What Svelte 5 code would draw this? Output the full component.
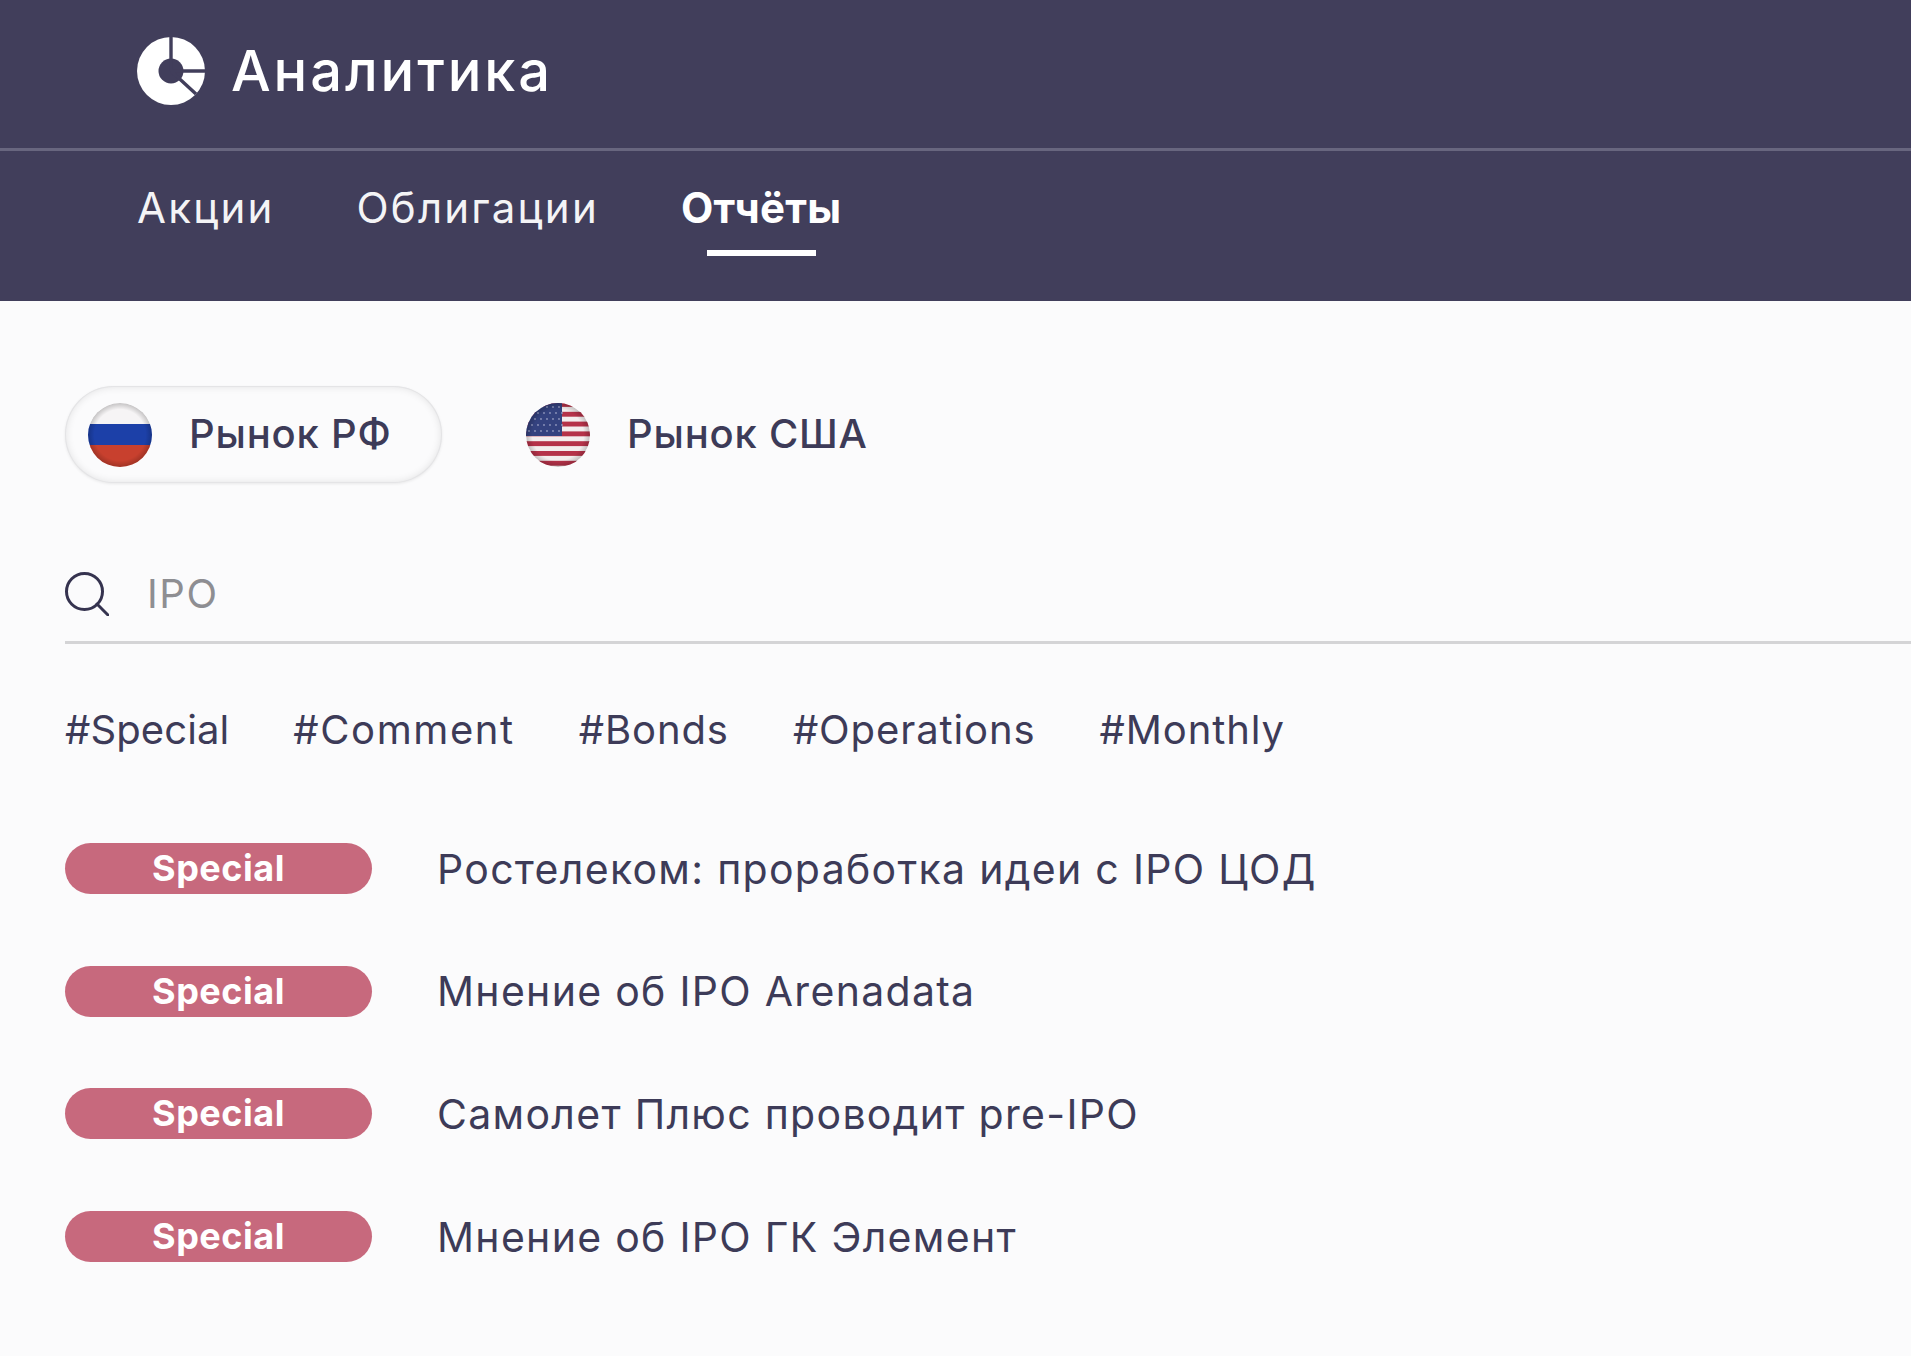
<script>
	const tags = ['#Special', '#Comment', '#Bonds', '#Operations', '#Monthly'];
	const reports = [
		'Ростелеком: проработка идеи с IPO ЦОД',
		'Мнение об IPO Arenadata',
		'Самолет Плюс проводит pre-IPO',
		'Мнение об IPO ГК Элемент'
	];
	const stripes = [0, 1, 2, 3, 4, 5, 6];
	const stars = [];
	for (let row = 0; row < 5; row++) {
		for (let col = 0; col < 6; col++) {
			stars.push({ x: 3 + col * 6 + (row % 2) * 3, y: 4 + row * 6 });
		}
	}
</script>

<div class="page">
	<header class="header">
		<div class="brand">
			<svg class="logo" viewBox="0 0 68 68" aria-hidden="true">
				<circle cx="34" cy="34" r="34" fill="#fff" />
				<circle cx="34" cy="34" r="12.5" fill="#413e5b" />
				<path d="M34 34V-1M34 34H69M34 34L59 57" fill="none" stroke="#413e5b" stroke-width="3.4" />
			</svg>
			<span class="title">Аналитика</span>
		</div>
		<nav class="nav">
			<a href="#a" class="nav-item">Акции</a>
			<a href="#b" class="nav-item">Облигации</a>
			<a href="#c" class="nav-item active">Отчёты</a>
		</nav>
	</header>

	<main class="content">
		<div class="markets">
			<button class="market selected">
				<svg class="flag" viewBox="0 0 64 64" aria-hidden="true">
					<defs>
						<clipPath id="round"><circle cx="32" cy="32" r="32" /></clipPath>
						<filter id="soft"><feGaussianBlur stdDeviation="0.7" /></filter>
						<radialGradient id="shade">
							<stop offset="0.8" stop-color="#000" stop-opacity="0" />
							<stop offset="1" stop-color="#000" stop-opacity="0.2" />
						</radialGradient>
					</defs>
					<g clip-path="url(#round)">
						<g filter="url(#soft)">
							<rect x="-2" y="-2" width="68" height="23" fill="#f6f4f5" />
							<rect x="-2" y="21" width="68" height="21" fill="#1f3fa8" />
							<rect x="-2" y="42" width="68" height="24" fill="#c8412f" />
						</g>
						<circle cx="32" cy="32" r="32" fill="url(#shade)" />
					</g>
				</svg>
				<span>Рынок РФ</span>
			</button>
			<button class="market">
				<svg class="flag" viewBox="0 0 64 64" aria-hidden="true">
					<g clip-path="url(#round)">
						<rect width="64" height="64" fill="#f3eeee" />
						<g filter="url(#soft)">
							{#each stripes as i}
								<rect x="-2" y={i * 9.8 - 1} width="68" height="4.9" fill="#b5334a" />
							{/each}
						</g>
						<rect width="36" height="33" fill="#34427f" />
						{#each stars as s}
							<circle cx={s.x} cy={s.y} r="0.9" fill="#8f97bd" />
						{/each}
						<circle cx="32" cy="32" r="32" fill="url(#shade)" />
					</g>
				</svg>
				<span>Рынок США</span>
			</button>
		</div>

		<div class="search">
			<svg class="search-icon" viewBox="0 0 44 44" aria-hidden="true">
				<circle cx="19.5" cy="19.5" r="18" />
				<path d="M32 32L43 43" />
			</svg>
			<span class="query">IPO</span>
		</div>

		<div class="tags">
			{#each tags as tag}
				<span class="tag">{tag}</span>
			{/each}
		</div>

		<ul class="reports">
			{#each reports as report}
				<li class="report">
					<span class="badge">Special</span>
					<span class="report-title">{report}</span>
				</li>
			{/each}
		</ul>
	</main>
</div>

<style>
	:global(body) {
		margin: 0;
		background: #fbfbfc;
	}
	.page {
		height: 1356px;
		overflow: hidden;
		background: #fbfbfc;
		font-family: Inter, 'Noto Sans', sans-serif;
		color: #3d3b58;
	}
	.header {
		height: 301px;
		background: #413e5b;
		color: #fff;
		box-sizing: border-box;
	}
	.brand {
		height: 151px;
		box-sizing: border-box;
		padding: 0 0 6px 137px;
		display: flex;
		align-items: center;
		gap: 26px;
		border-bottom: 3px solid #68667f;
	}
	.logo {
		width: 68px;
		height: 68px;
		flex: none;
	}
	.title {
		font-size: 56px;
		font-weight: 500;
		letter-spacing: 2.9px;
	}
	.nav {
		display: flex;
		gap: 82px;
		padding: 0 0 0 137px;
	}
	.nav-item {
		color: #f4f4f6;
		text-decoration: none;
		font-size: 42px;
		line-height: 50px;
		letter-spacing: 2.2px;
		padding: 32px 0 0;
		height: 105px;
		box-sizing: border-box;
		position: relative;
	}
	.active {
		font-weight: 700;
		color: #fff;
		letter-spacing: 0.2px;
	}
	.active::after {
		content: '';
		position: absolute;
		left: 26px;
		right: 25px;
		top: 99px;
		height: 6px;
		background: #fff;
	}
	.content {
		padding: 85px 0 0 65px;
	}
	.markets {
		display: flex;
		gap: 84px;
		align-items: center;
	}
	.market {
		display: flex;
		align-items: center;
		gap: 37px;
		height: 97px;
		padding: 0;
		background: none;
		border: none;
		font: inherit;
		color: inherit;
		font-size: 40px;
		font-weight: 500;
		letter-spacing: 0.8px;
	}
	.market span {
		margin-top: -2px;
	}
	.market.selected {
		width: 377px;
		box-sizing: border-box;
		padding-left: 23px;
		border-radius: 49px;
		background: #fbfbfc;
		box-shadow:
			inset 0 0 0 1px #e4e4e6,
			inset 0 0 9px rgba(0, 0, 0, 0.12),
			0 1px 3px rgba(0, 0, 0, 0.08);
	}
	.flag {
		width: 64px;
		height: 64px;
		flex: none;
	}
	.search {
		margin-top: 85px;
		height: 73px;
		box-sizing: content-box;
		border-bottom: 3px solid #d4d4d6;
		display: flex;
		align-items: flex-start;
		gap: 38px;
	}
	.search-icon {
		width: 44px;
		height: 44px;
		flex: none;
		margin-top: 4px;
		fill: none;
		stroke: #35334f;
		stroke-width: 3;
		stroke-linecap: round;
	}
	.query {
		margin-top: 4px;
		font-size: 40px;
		line-height: 44px;
		letter-spacing: 1.6px;
		color: #8e8e92;
	}
	.tags {
		display: flex;
		gap: 64px;
		margin-top: 62px;
	}
	.tag {
		font-size: 40px;
		line-height: 48px;
		letter-spacing: 0.9px;
	}
	.tag:nth-child(1) {
		letter-spacing: 0.1px;
	}
	.tag:nth-child(2) {
		letter-spacing: 1.6px;
	}
	.reports {
		list-style: none;
		margin: 89px 0 0;
		padding: 0;
		display: flex;
		flex-direction: column;
		gap: 71.7px;
	}
	.report {
		display: flex;
		align-items: center;
		gap: 65px;
		height: 51px;
	}
	.badge {
		width: 307px;
		height: 51px;
		flex: none;
		border-radius: 26px;
		background: #c7697d;
		color: #fff;
		font-size: 36px;
		font-weight: 700;
		line-height: 51px;
		letter-spacing: 0.5px;
		text-align: center;
	}
	.report-title {
		font-size: 41px;
		letter-spacing: 1.3px;
		white-space: nowrap;
	}
</style>
